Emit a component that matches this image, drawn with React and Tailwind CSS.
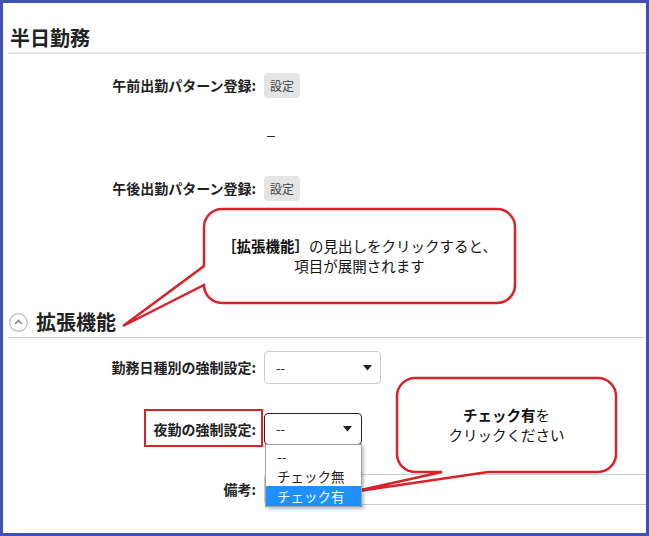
const RED = "#d8232a";

function Caret() {
  return (
    <svg width="9" height="6" viewBox="0 0 9 6" className="shrink-0">
      <path d="M0 0 H9 L4.5 5.5 Z" fill="#222" />
    </svg>
  );
}

function Row({ label, className = "", children }) {
  return (
    <div className={`flex items-center ${className}`}>
      <div className="w-[248px] shrink-0 text-right text-[14px] font-bold text-[#222]">{label}</div>
      <div className="ml-2 flex flex-1 items-center">{children}</div>
    </div>
  );
}

function SetButton() {
  return (
    <span className="flex h-[25px] w-[36px] items-center justify-center rounded-[4px] bg-[#e4e4e4] text-[12px] text-[#444]">
      設定
    </span>
  );
}

export default function App() {
  return (
    <div
      className="relative h-[536px] w-[649px] overflow-hidden bg-white text-[#222]"
      style={{ fontFamily: '"Noto Sans CJK JP", "Noto Sans", sans-serif' }}
    >
      <div className="h-full border-[3px] border-[#3f51b5] pl-[5px]">
        <div className="mt-[21px] border-b-2 border-[#e2e2e2] pl-[2px] text-[20px] font-bold leading-[28px]">
          半日勤務
        </div>

        <Row label="午前出勤パターン登録:" className="mt-[19px] h-[25px]">
          <SetButton />
        </Row>
        <Row label="" className="mt-[27px] h-[20px]">
          <span className="pl-[3px] font-['Liberation_Sans',sans-serif] text-[14px] leading-[20px]">–</span>
        </Row>
        <Row label="午後出勤パターン登録:" className="mt-[31px] h-[25px]">
          <SetButton />
        </Row>

        <div className="mt-[107px] flex items-center gap-2 border-b border-[#cfcfcf] pb-[1px] pl-[1px]">
          <svg width="19" height="19" viewBox="0 0 19 19" className="shrink-0">
            <circle cx="9.5" cy="9.5" r="8.8" fill="none" stroke="#bdbdbd" strokeWidth="1.2" />
            <polyline points="6,11 9.5,7.5 13,11" fill="none" stroke="#8a8a8a" strokeWidth="1.6" />
          </svg>
          <span className="text-[20px] font-bold leading-[28px]">拡張機能</span>
        </div>

        <Row label="勤務日種別の強制設定:" className="mt-[13px] h-[33px]">
          <div className="flex h-[33px] w-[117px] items-center justify-between rounded-[4px] border border-[#cccccc] pl-[11px] pr-[8px] text-[13px]">
            <span>--</span>
            <Caret />
          </div>
        </Row>

        <Row label="夜勤の強制設定:" className="mt-[29px] h-[32px]">
          <div className="relative h-[32px] w-[98px]">
            <div className="flex h-full items-center justify-between rounded-[4px] border-[1.5px] border-[#222] pl-[11px] pr-[9px] text-[13px]">
              <span>--</span>
              <Caret />
            </div>
            <div className="absolute left-[1px] top-[31px] z-10 w-[97px] border border-[#a0a0a0] bg-white pt-[1px] text-[13.5px] shadow-[2px_2px_3px_rgba(0,0,0,0.25)]">
              <div className="h-[20px] pl-[11px] leading-[20px]">--</div>
              <div className="h-[20px] pl-[11px] leading-[20px]">チェック無</div>
              <div className="h-[20px] bg-[#1e90ff] pl-[11px] leading-[20px] text-white">チェック有</div>
            </div>
          </div>
        </Row>

        <Row label="備考:" className="mt-[29px] h-[31px]">
          <div className="h-[31px] flex-1 rounded-l-[4px] border border-r-0 border-[#cccccc]" />
        </Row>
      </div>

      {/* red highlight round the label */}
      <div className="absolute left-[144px] top-[409px] h-[38px] w-[119px] border-2 border-[#d8232a]" />

      {/* callouts */}
      <svg className="pointer-events-none absolute left-0 top-0" width="649" height="536">
        <path
          d="M222 209 H497 A18 18 0 0 1 515 227 V285 A18 18 0 0 1 497 303 H222 A18 18 0 0 1 204 285 L123 326 L204 266 V227 A18 18 0 0 1 222 209 Z"
          fill="white"
          stroke={RED}
          strokeWidth="2.5"
        />
        <path
          d="M415 378 H598 A18 18 0 0 1 616 396 V454 A18 18 0 0 1 598 472 H488 L352 492 L442 472 H415 A18 18 0 0 1 397 454 V396 A18 18 0 0 1 415 378 Z"
          fill="white"
          stroke={RED}
          strokeWidth="2.5"
        />
      </svg>

      <div className="absolute left-[204px] top-[209px] flex h-[94px] w-[311px] flex-col items-center justify-center text-[14.5px] leading-[20px] text-[#111]">
        <div>
          <b>［拡張機能］</b>の見出しをクリックすると、
        </div>
        <div>項目が展開されます</div>
      </div>

      <div className="absolute left-[397px] top-[378px] flex h-[94px] w-[219px] flex-col items-center justify-center text-[14.5px] leading-[20px] text-[#111]">
        <div>
          <b>チェック有</b>を
        </div>
        <div>クリックください</div>
      </div>
    </div>
  );
}
